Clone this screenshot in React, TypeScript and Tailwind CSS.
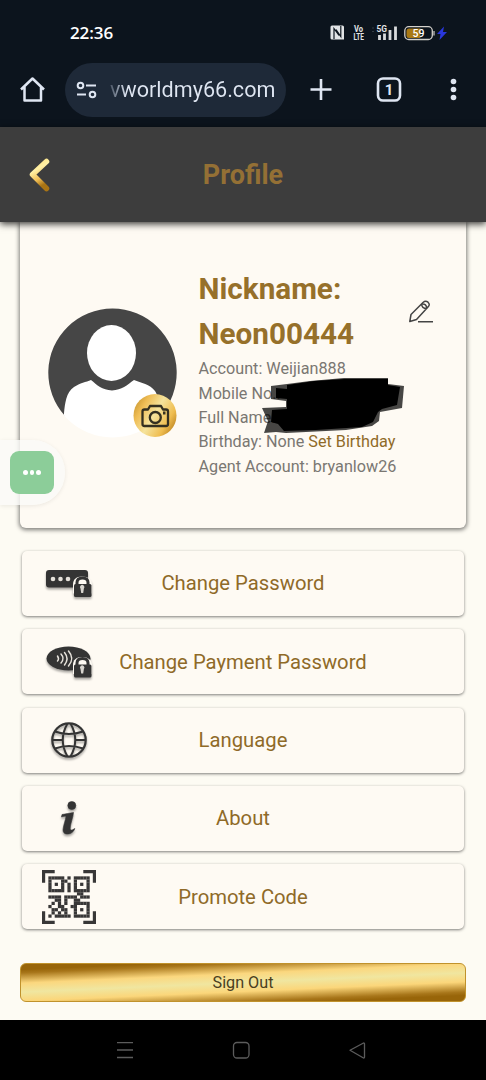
import type { ReactNode } from "react";

const QR_ROWS = [
  "XXXXX.X.XXXXX",
  "X...XX..X...X",
  "X.X.X.X.X.X.X",
  "X...X.X.X...X",
  "XXXXX.X.XXXXX",
  ".........XX..",
  "XXXX.XXXX.XXX",
  "..XX.X..XX...",
  ".X.X.X..XXXXX",
  "X..XX..XX...X",
  ".XX.XX..X.X.X",
  ".X.X.X..X...X",
  "X.XXXXX.XXXXX",
];

function Lock({ y }: { y: number }) {
  return (
    <g transform={`translate(0 ${y})`}>
      <path d="M27 24v-9c0-5 3-8 9-8s10 3 10 8v9z" fill="#fefaf3" />
      <path d="M31 16v-3c0-3 2-4.500 5.500-4.500s5.500 1.500 5.500 4.500v3" fill="none" stroke="#343434" strokeWidth="3" />
      <rect x="28" y="14.500" width="17.500" height="13" rx="1.500" fill="#343434" />
      <path d="M34.500 19a2.200 2.200 0 1 1 3.400 0l-.7 4.500h-2z" fill="#d8d5cf" />
    </g>
  );
}

function PasswordIcon() {
  return (
    <svg width="50" height="34" viewBox="0 0 50 34" className="ml-[4px] drop-shadow-[0_2px_1px_rgba(0,0,0,0.35)]">
      <rect x="0" y="3" width="42" height="17.500" rx="3" fill="#343434" />
      <circle cx="7" cy="12" r="2.300" fill="#e6e2db" />
      <circle cx="14.500" cy="12" r="2.300" fill="#e6e2db" />
      <circle cx="22" cy="12" r="2.300" fill="#e6e2db" />
      <Lock y={2.500} />
    </svg>
  );
}

function PaymentIcon() {
  return (
    <svg width="50" height="38" viewBox="0 0 50 38" className="ml-[4px] drop-shadow-[0_2px_1px_rgba(0,0,0,0.35)]">
      <ellipse cx="22.500" cy="15.500" rx="22" ry="12" fill="#343434" />
      <g fill="none" stroke="#e6e2db" strokeWidth="1.500" strokeLinecap="round">
        <path d="M11.500 13q2 3 0 5" />
        <path d="M15 11q4 4.500 0 9" />
        <path d="M18.500 9.500q5 6 0 12.500" />
        <path d="M22.500 8q6.500 7.500 0 15" />
      </g>
      <Lock y={7} />
    </svg>
  );
}

function GlobeIcon() {
  return (
    <svg width="38" height="38" viewBox="0 0 38 38" fill="none" stroke="#343434" strokeWidth="2.200" className="drop-shadow-[0_2px_1px_rgba(0,0,0,0.35)]">
      <circle cx="19" cy="19" r="16.700" />
      <path d="M17.500 2.500Q8 19 17.500 35.500M20.500 2.500Q30 19 20.500 35.500M5 10.500Q19 15.500 33 10.500M5 27.500Q19 22.500 33 27.500M2.500 19H12.800M25.200 19H35.500" strokeWidth="2" />
    </svg>
  );
}

function InfoIcon() {
  return (
    <svg width="20" height="38" viewBox="0 0 20 38" fill="#343434" stroke="#343434" strokeWidth="0.600" className="drop-shadow-[0_2px_1px_rgba(0,0,0,0.35)]">
      <circle cx="12.800" cy="6.500" r="4" />
      <path d="M3 15.500C7 15 10 14 14.500 13.500C14 19 11.200 25 11.200 29.500C11.500 32 13.500 31 15.800 29.500C15 33 11.500 35 8.500 35C5 35 3.600 33 4.200 29.500C4.700 25.500 6.600 21 7 17.500C6 16.800 4 17.500 2.500 18Z" />
    </svg>
  );
}

function QrIcon() {
  return (
    <svg width="54" height="54" viewBox="0 0 17 17" fill="#383737">
      <path d="M0 0h4v1H1v3H0zM13 0h4v4h-1V1h-3zM0 13h1v3h3v1H0zM16 13h1v4h-4v-1h3z" />
      {QR_ROWS.flatMap((row, y) =>
        row.split("").map((c, x) =>
          c === "X" ? <rect key={`${x}-${y}`} x={x + 2} y={y + 2} width="1.020" height="1.020" /> : null,
        ),
      )}
    </svg>
  );
}

function MenuRow({ icon, label }: { icon: ReactNode; label: string }) {
  return (
    <button className="grid h-[65px] w-full grid-cols-[93px_1fr_93px] items-center rounded-[5px] bg-[#fefaf3] shadow-[0_1px_3px_rgba(0,0,0,0.5)]">
      <span className="flex justify-center">{icon}</span>
      <span className="-mx-8 text-center text-[20.250px] text-[#8f6a28]">{label}</span>
    </button>
  );
}

function BrowserChrome() {
  return (
    <div className="h-[127px] shrink-0 bg-[#0c141d] text-[#dfe6f2]">
      <div className="flex h-[62px] items-center pt-[4px] pl-[70px]">
        <span className="w-[259px] font-['Open_Sans'] text-[17px] font-semibold tracking-[-0.1px] text-white">22:36</span>
        <svg width="120" height="20" viewBox="0 0 120 20">
          <path d="M3 2.500h10.500a1.500 1.500 0 0 1 1.500 1.500v12.500H3a1.500 1.500 0 0 1-1.500-1.500V4A1.500 1.500 0 0 1 3 2.500z" fill="#e2e4e6" />
          <path d="M5 16V5.500l5 7M7 3.500M11.800 3v10.500l-4.800-7" fill="none" stroke="#0c141d" strokeWidth="1.200" />
          <text x="25" y="9" fontSize="9" fontWeight="700" fill="#e2e4e6" textLength="9" lengthAdjust="spacingAndGlyphs" fontFamily="Roboto">Vo</text>
          <text x="24.500" y="17.300" fontSize="9" fontWeight="700" fill="#e2e4e6" textLength="10.500" lengthAdjust="spacingAndGlyphs" fontFamily="Roboto">LTE</text>
          <path d="M43 5h2M43 8.500h2" stroke="#343b42" />
          <text x="47.500" y="9.300" fontSize="9" fontWeight="700" fill="#e2e4e6" textLength="10.500" lengthAdjust="spacingAndGlyphs" fontFamily="Roboto">5G</text>
          <path d="M50.500 12v5M55.500 10.500v6.500M61 7v10M66.500 3.500V17" stroke="#d8dadc" strokeWidth="2.800" />
          <rect x="75.800" y="3.700" width="27.500" height="12.800" rx="4" fill="#0c141d" stroke="#d4d1cc" strokeWidth="1.300" />
          <path d="M80 5.500h11.500v9.500H80a2.500 2.500 0 0 1-2.500-2.500V8a2.500 2.500 0 0 1 2.500-2.500z" fill="#a97914" />
          <path d="M105 8v4.500" stroke="#a9a9a9" strokeWidth="1.500" />
          <text x="83.500" y="14" fontSize="10.500" fontWeight="500" fill="#fff" fontFamily="Roboto">59</text>
          <path d="M115 3.500l-7 7.500h3.500l-1 6 7.500-8h-4z" fill="#2937dd" />
        </svg>
      </div>
      <div className="flex h-[55px] items-center">
        <svg width="65" height="55" viewBox="0 0 65 55" fill="none" stroke="#dfe6f2" strokeWidth="2.500" strokeLinejoin="round">
          <path d="M21 27.500L32.500 16.500L44 27.500M24.500 25V38.500H41V25" />
        </svg>
        <div className="flex h-[54px] w-[221px] items-center rounded-full bg-[#1e2938] pl-[11px]">
          <svg width="22" height="18" viewBox="0 0 22 18" fill="none" stroke="#dfe6f2" strokeWidth="2">
            <circle cx="4.500" cy="4.500" r="2.800" />
            <path d="M10 4.500h10M1 13.500h9" />
            <circle cx="16.500" cy="13.500" r="2.800" />
          </svg>
          <span className="ml-[12px] bg-linear-to-r from-[#4a5565] from-0% to-[#dfe6f2] to-10% bg-clip-text text-[21.600px] leading-[30px] text-transparent">vworldmy66.com</span>
        </div>
        <svg width="200" height="55" viewBox="0 0 200 55" fill="none" stroke="#dfe6f2" strokeWidth="2.600">
          <path d="M24.500 27.500h21M35 17v21" />
          <rect x="92" y="16.500" width="22" height="22" rx="5" />
          <text x="103" y="33" textAnchor="middle" fontSize="15" fontWeight="700" fill="#dfe6f2" stroke="none" fontFamily="Roboto">1</text>
          <g fill="#dfe6f2" stroke="none">
            <circle cx="167.500" cy="19.500" r="2.800" />
            <circle cx="167.500" cy="27.500" r="2.800" />
            <circle cx="167.500" cy="35.500" r="2.800" />
          </g>
        </svg>
      </div>
    </div>
  );
}

function Avatar() {
  return (
    <svg width="130" height="134" viewBox="0 0 130 134">
      <defs>
        <clipPath id="face">
          <circle cx="64.500" cy="65" r="64.500" />
        </clipPath>
        <linearGradient id="badge" x1="0" y1="0.200" x2="1" y2="0.800">
          <stop offset="0" stopColor="#c6952f" />
          <stop offset="0.200" stopColor="#efbd55" />
          <stop offset="0.480" stopColor="#f5e39c" />
          <stop offset="0.780" stopColor="#efbd50" />
          <stop offset="1" stopColor="#b77e1c" />
        </linearGradient>
      </defs>
      <path d="M17 108A64.200 64.200 0 1 1 112 108Z" fill="#464646" />
      <g clipPath="url(#face)" fill="#fff">
        <ellipse cx="63.500" cy="45" rx="24.500" ry="28" />
        <path d="M16 130V105C17 96 18 84 26 79C32 75 38 74 43 72C49 77 54 82 64 82.500C74 82 79 77 86 72C93 75 102 76 107 83C112 91 113 103 113 130Z" />
      </g>
      <circle cx="107" cy="107.500" r="21.500" fill="url(#badge)" />
      <g fill="none" stroke="#343021" strokeWidth="2.300" strokeLinejoin="round" transform="translate(-0.500 0.500)">
        <path d="M97 101h3.500l2-3.500h11l2 3.500h3q2 0 2 2v12.500q0 2-2 2H97q-2 0-2-2V103q0-2 2-2z" />
        <circle cx="107.800" cy="109" r="5.500" />
        <path d="M115.500 104.500h2.500" strokeWidth="3" />
      </g>
    </svg>
  );
}

function ProfileCard() {
  return (
    <section className="relative flex h-[306px] rounded-b-[6px] bg-[#fefaf3] pt-[45px] pl-[28px] shadow-[0_1px_4px_1px_rgba(0,0,0,0.5)]">
      <div className="w-[150.500px] shrink-0 pt-[41px]">
        <Avatar />
      </div>
      <div className="whitespace-nowrap text-[16.200px] leading-[24.350px] text-[#7a7772]">
        <h2 className="mb-[1.300px] text-[29.700px] leading-[44.500px] font-bold text-[#96702a]">
          Nickname:
          <br />
          Neon00444
        </h2>
        <p>Account: Weijian888</p>
        <p>Mobile No.:</p>
        <p>Full Name:</p>
        <p>
          Birthday: None <span className="text-[#8f6a28]">Set Birthday</span>
        </p>
        <p>Agent Account: bryanlow26</p>
      </div>
      <svg className="absolute top-[76px] left-[386px]" width="30" height="28" viewBox="0 0 30 28" fill="none" stroke="#444" strokeWidth="1.500" strokeLinejoin="round">
        <path d="M3.800 23.500L5 16.500L17 4.500Q19.500 2.200 22 4.200Q24.500 6.500 22 9L10.500 21.500ZM15.800 6.200Q20.500 5.500 20.800 10.500M15.800 6.200Q15.500 10.500 20.800 10.500M12 23.700H27" />
      </svg>
      <svg className="absolute top-[151px] left-[236px]" width="155" height="66" viewBox="0 0 155 66">
        <path d="M15 13L31 11L54 8L88 5L132 5V11L148 13L146 35L124 39L123 48L116 53L90 57L30 60L20 59L8 60L12 48L6 35L30 34V28L15 26Z" fill="#000" opacity="0.720" />
        <path d="M20 15L31 16V12L58 8L88 6H132V12L144 14L141 32L126 36L122 39L117 49L106 54L60 57L28 58L22 51L15 49L16 37L31 36V26L20 25Z" fill="#000" />
      </svg>
    </section>
  );
}

export default function App() {
  return (
    <div className="flex h-[1080px] w-[486px] flex-col overflow-hidden bg-[#fdfbf3] font-['Roboto',sans-serif]">
      <BrowserChrome />
      <header className="relative z-10 grid h-[95px] shrink-0 grid-cols-[80px_1fr_80px] items-center bg-[#3d3d3d] shadow-[0_2px_7px_rgba(0,0,0,0.8)]">
        <svg width="80" height="50" viewBox="0 0 80 50" fill="none">
          <defs>
            <linearGradient id="back" x1="0" y1="0" x2="0.300" y2="1">
              <stop offset="0" stopColor="#ffe17b" />
              <stop offset="0.350" stopColor="#fff0a6" />
              <stop offset="0.700" stopColor="#f3c25a" />
              <stop offset="1" stopColor="#a97414" />
            </linearGradient>
          </defs>
          <path d="M46.500 11.500L32.500 24.500L46.500 38.500" stroke="url(#back)" strokeWidth="5.500" strokeLinecap="round" strokeLinejoin="round" />
        </svg>
        <h1 className="pt-[2px] text-center text-[27px] font-bold text-[#947035]">Profile</h1>
      </header>
      <main className="relative h-[798px] shrink-0 px-[20px]">
        <ProfileCard />
        <nav className="mt-[23px] flex flex-col gap-[13.300px] px-[2px]">
          <MenuRow icon={<PasswordIcon />} label="Change Password" />
          <MenuRow icon={<PaymentIcon />} label="Change Payment Password" />
          <MenuRow icon={<GlobeIcon />} label="Language" />
          <MenuRow icon={<InfoIcon />} label="About" />
          <MenuRow icon={<QrIcon />} label="Promote Code" />
        </nav>
        <button className="mt-[34px] block h-[39px] w-full rounded-[6px] border border-[#c0922c] bg-[linear-gradient(177.500deg,#986509_10%,#a8761a_16%,#fbd77e_34%,#f0e6a0_50%,#fbd67a_66%,#a8761a_84%,#986509_90%)] text-[16.200px] text-[#4a401f]">
          Sign Out
        </button>
        <div className="absolute top-[218px] left-0 flex h-[65px] w-[65px] items-center rounded-r-[32px] bg-[#fafaf7]/80 pl-[10px] shadow-[0_1px_4px_rgba(0,0,0,0.080)]">
          <div className="flex h-[43px] w-[44px] items-center justify-center gap-[2px] rounded-[9px] bg-[#8ccd99]">
            <i className="size-[4.500px] rounded-full bg-white" />
            <i className="size-[4.500px] rounded-full bg-white" />
            <i className="size-[4.500px] rounded-full bg-white" />
          </div>
        </div>
      </main>
      <footer className="h-[60px] shrink-0 bg-black">
        <svg width="486" height="60" viewBox="0 0 486 60" fill="none" stroke="#5c5c5c" strokeWidth="1.300" strokeLinejoin="round">
          <path d="M117 22.700h16M117 30h16M117 37.500h16" />
          <rect x="233.500" y="22.500" width="15.500" height="15.500" rx="3.500" />
          <path d="M350 30.300L363.500 23q1-.3 1 1v13q0 1.300-1 1z" />
        </svg>
      </footer>
    </div>
  );
}
